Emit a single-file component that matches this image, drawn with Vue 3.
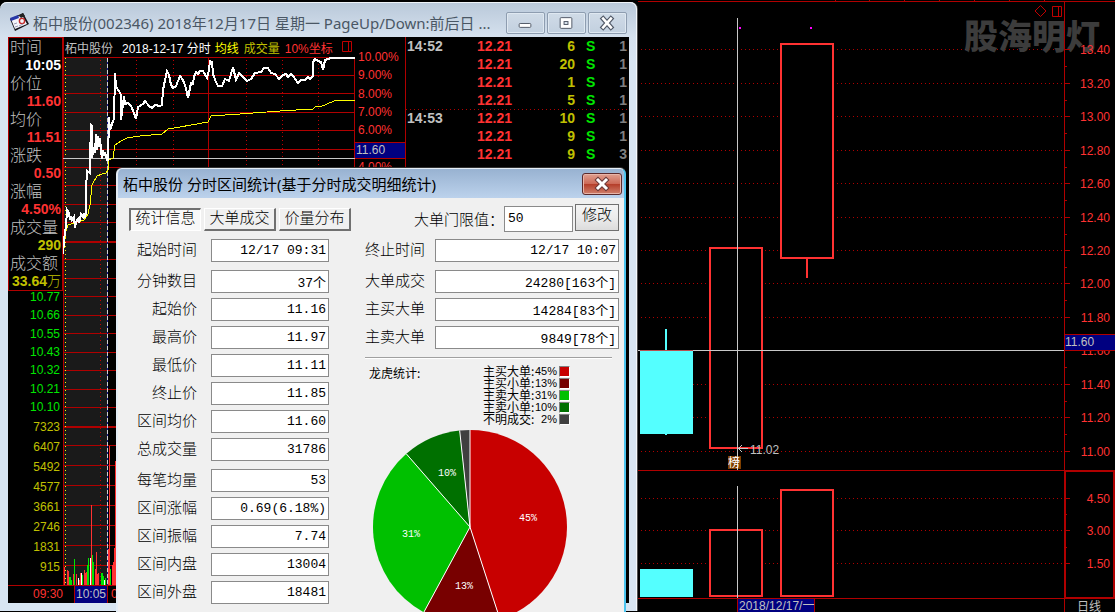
<script setup>
const quotes = [
  { label: '时间', value: '10:05', tone: 'white' },
  { label: '价位', value: '11.60', tone: 'red' },
  { label: '均价', value: '11.51', tone: 'red' },
  { label: '涨跌', value: '0.50', tone: 'red' },
  { label: '涨幅', value: '4.50%', tone: 'red' },
  { label: '成交量', value: '290', tone: 'yellow' },
  { label: '成交额', value: '33.64', unit: '万', tone: 'yellow' },
]
const lowPrices = ['10.77', '10.66', '10.55', '10.43', '10.32', '10.21', '10.10']
const volumes = ['7323', '6407', '5492', '4577', '3661', '2746', '1831', '915']
const percents = ['10.00%', '9.00%', '8.00%', '7.00%', '6.00%', '', '4.00%']
const trades = [
  { time: '14:52', price: '12.21', size: 6, side: 'S', count: 1 },
  { time: '', price: '12.21', size: 20, side: 'S', count: 1 },
  { time: '', price: '12.21', size: 1, side: 'S', count: 1 },
  { time: '', price: '12.21', size: 5, side: 'S', count: 1 },
  { time: '14:53', price: '12.21', size: 10, side: 'S', count: 1 },
  { time: '', price: '12.21', size: 9, side: 'S', count: 1 },
  { time: '', price: '12.21', size: 9, side: 'S', count: 3 },
]
const gridRows = [75, 93, 112, 130, 149, 167, 185, 204, 222, 259, 278, 296, 315, 333, 352, 370, 389, 407, 445, 465, 485, 505, 525, 545, 565]
const dotCols = [100, 136, 173, 246, 282, 318]
const priceLine =
  '63,254 64,240 66,226 67,210 69,213 70,220 71,216 72,220 74,217 75,228 76,222 78,219 79,223 81,214 83,217 84,213 85,218 86,212 86,190 87,171 90,173 90,160 91,125 92,126 92,158 94,147 95,153 96,134 97,150 98,136 99,147 100,138 101,150 102,159 103,150 104,156 105,152 107,160 108,160 109,117 110,130 112,124 114,119 115,73 116,87 119,91 121,95 121,120 124,96 125,104 128,103 131,106 134,113 136,119 138,107 143,104 145,101 149,106 152,108 155,105 160,106 162,105 163,90 165,80 167,71 169,75 171,85 173,88 176,86 180,76 183,80 186,88 188,98 191,83 193,84 194,77 196,72 198,74 200,71 203,71 207,78 209,70 210,61 212,62 213,74 216,82 218,86 222,86 225,79 229,81 233,67 236,80 239,73 243,77 247,81 251,79 255,73 261,72 264,68 268,68 271,73 275,74 279,79 283,75 286,74 288,77 291,74 293,76 298,83 301,80 305,80 308,77 310,79 313,76 313,62 315,59 318,61 321,62 323,70 325,60 328,59 331,58 355,58'
const averageLine =
  '64,248 66,231 68,225 74,223 84,220 88,214 90,205 92,185 97,176 102,174 106,173 108,170 109,160 113,158 115,145 121,141 127,138 140,136 162,134 168,129 180,127 208,122 211,116 240,114 280,111 313,109 316,106 320,107 327,104 334,101 355,100'
const bars = [
  [64, 567, 'r'], [67, 570, 'r'], [68, 571, 'r'], [69, 577, 'g'], [70, 577, 'g'], [71, 580, 'g'], [73, 574, 'r'],
  [74, 559, 'g'], [76, 574, 'r'], [78, 578, 'w'], [79, 580, 'r'], [80, 573, 'r'], [81, 573, 'w'], [82, 575, 'g'],
  [84, 570, 'r'], [85, 573, 'r'], [86, 572, 'r'], [87, 565, 'g'], [88, 558, 'g'], [90, 558, 'w'], [91, 505, 'r'],
  [92, 555, 'g'], [93, 562, 'g'], [95, 569, 'r'], [96, 552, 'r'], [97, 574, 'r'], [98, 573, 'r'], [101, 573, 'g'],
  [102, 573, 'g'], [103, 576, 'g'], [104, 580, 'w'], [105, 578, 'g'], [108, 549, 'r'], [109, 446, 'r'], [110, 569, 'g'],
  [112, 565, 'r'], [113, 562, 'r'], [114, 548, 'r'], [115, 461, 'r'],
]

const tabs = ['统计信息', '大单成交', '价量分布']
const leftStats = [
  { label: '起始时间', value: '12/17 09:31' },
  { label: '分钟数目', value: '37个', group: true },
  { label: '起始价', value: '11.16' },
  { label: '最高价', value: '11.97' },
  { label: '最低价', value: '11.11' },
  { label: '终止价', value: '11.85' },
  { label: '区间均价', value: '11.60' },
  { label: '总成交量', value: '31786' },
  { label: '每笔均量', value: '53', group: true },
  { label: '区间涨幅', value: '0.69(6.18%)' },
  { label: '区间振幅', value: '7.74' },
  { label: '区间内盘', value: '13004' },
  { label: '区间外盘', value: '18481' },
]
const rightStats = [
  { label: '终止时间', value: '12/17 10:07' },
  { label: '大单成交', value: '24280[163个]', group: true },
  { label: '主买大单', value: '14284[83个]' },
  { label: '主卖大单', value: '9849[78个]' },
]
const slices = [
  { name: '主买大单', pct: '45%', end: 0.45, color: '#c80000', lx: 156, ly: 92 },
  { name: '主买小单', pct: '13%', end: 0.579, color: '#780000', lx: 92, ly: 160 },
  { name: '主卖大单', pct: '31%', end: 0.886, color: '#00c000', lx: 39, ly: 108 },
  { name: '主卖小单', pct: '10%', end: 0.983, color: '#007000', lx: 75, ly: 47 },
  { name: '不明成交', pct: '2%', end: 1, color: '#404040' },
]
const rim = (f) => {
  const a = f * Math.PI * 2
  return [98 + 97 * Math.sin(a), 98 - 97 * Math.cos(a)]
}
const pie = slices.map((s, i) => {
  const start = i ? slices[i - 1].end : 0
  const [x1, y1] = rim(start)
  const [x2, y2] = rim(s.end)
  return { ...s, d: `M98 98L${x1} ${y1}A97 97 0 0 1 ${x2} ${y2}Z`, x: x2, y: y2 }
})

const priceAxis = [
  [49, '13.40'], [83, '13.20'], [116, '13.00'], [150, '12.80'], [183, '12.60'], [217, '12.40'], [250, '12.20'],
  [283, '12.00'], [317, '11.80'], [350, '11.60'], [384, '11.40'], [417, '11.20'], [451, '11.00'],
]
const volumeAxis = [[498, '4.50'], [530, '3.00'], [563, '1.50']]
const minorTicks = [66, 100, 133, 167, 200, 234, 267, 300, 334, 367, 401, 434, 514, 547]
const topTicks = [835, 869, 904, 939, 974, 1009, 1044]
</script>

<template>
  <main class="desktop">
    <section class="daily" aria-label="日线">
      <div class="plot">
        <svg class="plot-art" aria-hidden="true">
          <g transform="translate(-638 0)" shape-rendering="crispEdges">
            <g stroke="#b00000">
              <line v-for="x in topTicks" :key="x" :x1="x + 0.5" :x2="x + 0.5" y1="0" y2="2" />
            </g>
            <g class="dots">
              <line v-for="[y] in priceAxis" :key="y" x1="641" x2="2600" :y1="y + 0.5" :y2="y + 0.5" />
              <line v-for="[y] in volumeAxis" :key="y" x1="641" x2="2600" :y1="y + 0.5" :y2="y + 0.5" />
            </g>
            <g fill="#b00000">
              <rect x="638" y="1" width="2000" height="1" />
              <rect x="638" y="470" width="2000" height="1" />
              <rect x="638" y="598" width="2000" height="1" />
            </g>
            <g fill="#54ffff">
              <rect x="640" y="351" width="53" height="83" />
              <rect x="665" y="329" width="2" height="22" />
              <rect x="665" y="434" width="2" height="1" />
              <rect x="640" y="569" width="53" height="28" />
            </g>
            <g fill="#000" stroke="#ff3232" stroke-width="2">
              <rect x="710" y="248" width="52" height="200" />
              <rect x="781" y="44" width="52" height="214" />
              <rect x="710" y="530" width="52" height="66" />
              <rect x="781" y="490" width="52" height="106" />
              <line x1="807" x2="807" y1="259" y2="278" />
            </g>
            <g fill="#ff00ff">
              <rect x="739" y="27" width="2" height="2" />
              <rect x="810" y="27" width="2" height="2" />
            </g>
            <rect x="728" y="456" width="13" height="13" fill="#804000" />
            <g fill="#c8c8c8">
              <rect x="638" y="350" width="2000" height="1" />
              <rect x="737" y="18" width="1" height="452" />
              <rect x="737" y="486" width="1" height="112" />
            </g>
            <path d="M748 448.500H738M742 445l-3 3.500 3 3.500" stroke="#c8c8c8" fill="none" />
            <rect x="640" y="350" width="53" height="1" fill="#b85050" />
          </g>
          <g transform="translate(-638 0)">
            <text class="note" x="750" y="454">11.02</text>
            <text class="badge" x="728" y="467">榜</text>
          </g>
        </svg>
        <svg class="tools" viewBox="0 0 28 13" aria-hidden="true">
          <path d="M6.500 .5l5.500 5.500-5.500 5.500L1 6zM18.500 1.500h9v10h-9zM24.500 1.500v10" fill="none" stroke="#c00000" />
        </svg>
        <div class="date-tag">2018/12/17/一</div>
      </div>
      <svg class="axis">
        <g shape-rendering="crispEdges" fill="#b00000">
          <rect x="0" y="1" width="1" height="611" />
          <rect x="0" y="1" width="51" height="1" />
          <rect v-for="[y] in priceAxis" :key="y" x="1" :y="y" width="5" height="1" />
          <rect v-for="[y] in volumeAxis" :key="y" x="1" :y="y" width="5" height="1" />
          <rect v-for="y in minorTicks" :key="y" x="1" :y="y" width="2" height="1" />
          <rect x="1" y="471" width="49" height="127" fill="none" stroke="#b00000" stroke-width="2" />
        </g>
        <text v-for="[y, t] in priceAxis" :key="t" class="axis-text" x="46" :y="y + 5">{{ t }}</text>
        <text v-for="[y, t] in volumeAxis" :key="t" class="axis-text" x="46" :y="y + 5">{{ t }}</text>
        <rect x="1" y="334" width="50" height="17" fill="#b00000" />
        <rect x="1" y="335" width="50" height="15" fill="#000080" />
        <text class="note" x="1" y="346">11.60</text>
        <text class="period" x="13" y="611">日线</text>
      </svg>
      <div class="watermark">股海明灯</div>
    </section>

    <section class="window">
      <header class="titlebar">
        <svg class="app-icon" viewBox="0 0 22 20" aria-hidden="true">
          <path d="M1 7L14 1l6 11-14 7z" fill="#15151c" />
          <path d="M2 7l4 10 12-5-5-9z" fill="#f4f4fa" />
          <path d="M1 6l8-3 1 3-8 3z" fill="#2737a8" />
          <path d="M10 4l4-3 2 3-4 2z" fill="#222" />
          <circle cx="13" cy="9" r="2.600" fill="none" stroke="#c52a2a" stroke-width="1.400" />
          <path d="M5 12l3-1M6 15l3-1M10 14l4-2" stroke="#9a9ab5" />
        </svg>
        <h1>柘中股份(002346) 2018年12月17日 星期一 PageUp/Down:前后日 ...</h1>
        <div class="controls">
          <button type="button" aria-label="最小化">
            <svg viewBox="0 0 38 20"><rect x="12.500" y="10.500" width="12" height="4" rx="1" fill="#fff" stroke="#505866" /></svg>
          </button>
          <button type="button" aria-label="最大化">
            <svg viewBox="0 0 38 20"><rect x="12.500" y="4.500" width="12" height="11" rx="1" fill="#fff" stroke="#505866" /><rect x="16.500" y="8.500" width="4" height="3" fill="#dbe5ef" stroke="#505866" /></svg>
          </button>
          <button type="button" aria-label="关闭">
            <svg viewBox="0 0 38 20"><path d="M14.500 5.500l8 9M22.500 5.500l-8 9" stroke="#505866" stroke-width="5" stroke-linecap="square" /><path d="M14.500 5.500l8 9M22.500 5.500l-8 9" stroke="#fff" stroke-width="2.600" stroke-linecap="square" /></svg>
          </button>
        </div>
      </header>

      <div class="content">
        <aside class="side">
          <dl class="quotes">
            <template v-for="q in quotes" :key="q.label">
              <dt>{{ q.label }}</dt>
              <dd :class="q.tone">{{ q.value }}<span v-if="q.unit" class="unit">{{ q.unit }}</span></dd>
            </template>
          </dl>
          <div class="scale low"><span v-for="p in lowPrices" :key="p">{{ p }}</span></div>
          <div class="scale vol"><span v-for="v in volumes" :key="v">{{ v }}</span></div>
          <div class="time-cell">09:30</div>
        </aside>

        <div class="minute">
          <div class="legendbar">
            <span class="grey">柘中股份</span>
            <span class="white">2018-12-17 分时</span>
            <span class="bright">均线</span>
            <span class="yellow">成交量</span>
            <span class="red">10%坐标</span>
            <svg viewBox="0 0 11 12" aria-hidden="true"><path d="M.5.500h9v10h-9zM6.500.500v10" fill="none" stroke="#c00000" /></svg>
          </div>
          <svg class="minute-art" viewBox="63 57 292 528" aria-hidden="true">
            <g shape-rendering="crispEdges">
              <rect x="63" y="57" width="44" height="528" fill="#1a1a1a" />
              <g fill="#b00000">
                <rect x="63" y="57" width="292" height="1" />
                <rect v-for="y in gridRows" :key="y" x="63" :y="y" width="292" height="1" />
                <rect x="63" y="241" width="292" height="2" />
                <rect x="63" y="426" width="292" height="2" />
                <rect x="63" y="57" width="1" height="528" />
                <rect x="208" y="57" width="1" height="528" />
                <rect x="354" y="57" width="1" height="528" />
              </g>
              <g stroke="#c00000" stroke-dasharray="1 3">
                <line v-for="x in dotCols" :key="x" :x1="x + 0.5" :x2="x + 0.5" y1="60" y2="585" />
              </g>
              <line x1="65.500" x2="65.500" y1="58" y2="585" stroke="#ffff00" stroke-dasharray="1 3" />
              <rect v-for="([x, y, c], i) in bars" :key="i" :x="x" :y="y" width="1" :height="585 - y" :class="'bar-' + c" />
              <line x1="107.500" x2="107.500" y1="58" y2="585" stroke="#1a1a90" />
              <line x1="107.500" x2="107.500" y1="58" y2="585" stroke="#d0d0d0" stroke-dasharray="4 2" />
              <rect x="63" y="158" width="292" height="1" fill="#c8c8c8" />
              <polyline :points="averageLine" fill="none" stroke="#ffff00" />
              <polyline :points="priceLine" fill="none" stroke="#fff" stroke-width="2" />
            </g>
          </svg>
          <div class="timebar"><span class="now">10:05</span><span class="red">0</span></div>
        </div>

        <div class="percent">
          <div class="percent-scale"><span v-for="p in percents" :key="p">{{ p }}</span></div>
          <span class="price-tag">11.60</span>
        </div>

        <table class="trades">
          <tbody>
            <tr v-for="(t, i) in trades" :key="i" :class="{ minuteStart: i === 4 }">
              <td class="t-time">{{ t.time }}</td>
              <td class="t-price">{{ t.price }}</td>
              <td class="t-size">{{ t.size }}</td>
              <td class="t-side">{{ t.side }}</td>
              <td class="t-count">{{ t.count }}</td>
            </tr>
          </tbody>
        </table>
      </div>
    </section>

    <section class="dialog" role="dialog" aria-labelledby="dialog-title">
      <header class="dialog-bar">
        <h2 id="dialog-title">柘中股份 分时区间统计(基于分时成交明细统计)</h2>
        <button type="button" class="dialog-close" aria-label="关闭">
          <svg viewBox="0 0 38 20"><path d="M15 6l8 8M23 6l-8 8" stroke="#6a3a3a" stroke-width="5" stroke-linecap="square" /><path d="M15 6l8 8M23 6l-8 8" stroke="#fff" stroke-width="3" stroke-linecap="square" /></svg>
        </button>
      </header>
      <div class="toolbar">
        <div class="tabs">
          <button v-for="(t, i) in tabs" :key="t" type="button" :class="{ active: i === 0 }">{{ t }}</button>
        </div>
        <label for="limit">大单门限值：</label>
        <input id="limit" type="text" value="50" />
        <button type="button" class="modify">修改</button>
      </div>
      <div class="columns">
        <div class="stats left">
          <div v-for="(s, i) in leftStats" :key="s.label" class="stat" :class="{ group: s.group }">
            <label :for="'l' + i">{{ s.label }}</label>
            <input :id="'l' + i" type="text" readonly :value="s.value" />
          </div>
        </div>
        <div class="right">
          <div class="stats">
            <div v-for="(s, i) in rightStats" :key="s.label" class="stat" :class="{ group: s.group }">
              <label :for="'r' + i">{{ s.label }}</label>
              <input :id="'r' + i" type="text" readonly :value="s.value" />
            </div>
          </div>
          <hr />
          <div class="summary">
            <span>龙虎统计:</span>
            <ul>
              <li v-for="s in slices" :key="s.name">
                <span class="name">{{ s.name }}:</span><span class="pct">{{ s.pct }}</span>
                <i :style="{ background: s.color }"></i>
              </li>
            </ul>
          </div>
          <svg class="pie" viewBox="0 0 196 196" role="img" aria-label="龙虎统计">
            <path v-for="s in pie" :key="s.name" :d="s.d" :fill="s.color" />
            <line v-for="s in pie" :key="s.pct" x1="98" y1="98" :x2="s.x" :y2="s.y" stroke="#fff" />
            <template v-for="s in pie" :key="s.color">
              <text v-if="s.lx" :x="s.lx" :y="s.ly">{{ s.pct }}</text>
            </template>
          </svg>
        </div>
      </div>
    </section>
  </main>
</template>

<style>
html,
body {
  background: #000;
}
</style>

<style scoped>
* {
  box-sizing: border-box;
}
.desktop {
  position: relative;
  height: 100vh;
  overflow: hidden;
  background: #000;
  font-family: 'Liberation Sans', 'Noto Sans CJK SC', sans-serif;
  font-size: 12px;
}
h1,
h2,
dl,
dd,
ul {
  margin: 0;
  padding: 0;
  font-weight: normal;
}
button,
input {
  font-family: inherit;
  margin: 0;
  padding: 0;
}
.white { color: #fff; }
.grey { color: #c0c0c0; }
.red { color: #ff3232; }
.yellow { color: #c0c000; }
.bright { color: #ffff00; }

.daily {
  position: relative;
  display: flex;
  height: 100%;
  padding-left: 638px;
}
.plot {
  position: relative;
  flex: 1;
}
.plot-art {
  display: block;
  width: 100%;
  height: 100%;
}
.dots line {
  stroke: #b00000;
  stroke-dasharray: 1 3;
}
.tools {
  position: absolute;
  top: 5px;
  right: 2px;
  width: 28px;
  height: 13px;
}
.date-tag {
  position: absolute;
  left: 99px;
  top: 599px;
  height: 14px;
  padding: 0 0 0 1px;
  line-height: 14px;
  background: #000080;
  border: solid #b00000;
  border-width: 0 1px;
  color: #c0c0c0;
  white-space: nowrap;
}
.axis {
  display: block;
  width: 51px;
  height: 100%;
  position: relative;
  z-index: 1;
}
.axis-text {
  fill: #ff3232;
  text-anchor: end;
}
.note,
.period {
  fill: #c0c0c0;
}
.badge {
  fill: #fff;
}
.watermark {
  position: absolute;
  top: 12px;
  right: 15px;
  font: 900 34px/46px 'Noto Sans CJK SC', sans-serif;
  color: #3c3c3c;
}

.window {
  position: absolute;
  left: 0;
  top: 2px;
  bottom: 1px;
  width: 637px;
  display: flex;
  flex-direction: column;
  padding: 0 8px 8px;
  border-radius: 7px 7px 0 0;
  background: linear-gradient(#b9c8d9 0, #d5e1ee 35px, #d8e5f2 60px);
  box-shadow: inset 0 1px #eef3f8, inset -1px 0 #f4f8fc, 1px 0 #505050;
}
.titlebar {
  display: flex;
  align-items: center;
  height: 35px;
  flex: none;
}
.app-icon {
  width: 22px;
  height: 20px;
  margin: 5px 2px 0 1px;
}
h1 {
  flex: 1;
  padding-top: 6px;
  font: 15px/22px 'Noto Sans', 'Noto Sans CJK SC', sans-serif;
  color: #4a5765;
  white-space: nowrap;
}
.controls {
  display: flex;
  gap: 2px;
  margin: 6px 2px 0 0;
}
.controls button {
  width: 39px;
  height: 22px;
  border: 1px solid #8e9db0;
  border-radius: 2px;
  background: linear-gradient(#d0dbe7, #c2d0df);
  box-shadow: inset 0 0 0 1px #dfe8f1;
}
.controls svg,
.dialog-close svg {
  display: block;
  width: 100%;
  height: 100%;
}
.controls path,
.dialog-close path {
  fill: none;
}
.content {
  flex: 1;
  min-height: 0;
  display: grid;
  grid-template-columns: 55px 292px 51px 1fr;
  background: #000;
  overflow: hidden;
}
.side {
  display: flex;
  flex-direction: column;
}
.quotes {
  border: 1px solid #b00000;
  color: #c0c0c0;
}
.quotes dt {
  height: 18px;
  padding-left: 1px;
  font-size: 16px;
  font-weight: 300;
  line-height: 20px;
  white-space: nowrap;
}
.quotes dd {
  display: flex;
  justify-content: flex-end;
  height: 18px;
  padding-right: 1px;
  font-size: 14px;
  font-weight: bold;
  line-height: 18px;
}
.unit {
  font-weight: 300;
}
.scale {
  display: flex;
  flex-direction: column;
  justify-content: space-between;
  padding-right: 3px;
  text-align: right;
  line-height: 12px;
}
.low {
  height: 122px;
  color: #00e600;
}
.vol {
  height: 152px;
  margin-top: 8px;
  color: #c0c000;
}
.time-cell {
  margin-top: 12px;
  height: 19px;
  border-top: 1px solid #b00000;
  text-align: right;
  line-height: 17px;
  color: #ff3232;
}
.legendbar {
  display: flex;
  align-items: center;
  height: 20px;
  padding-left: 1px;
  border-left: 1px solid #b00000;
  white-space: nowrap;
}
.legendbar .white { margin-left: 9px; }
.legendbar .bright { margin-left: 4px; }
.legendbar .yellow,
.legendbar .red { margin-left: 5px; }
.legendbar svg {
  width: 11px;
  height: 12px;
  margin: 0 2px 0 auto;
}
.minute-art {
  display: block;
  width: 292px;
  height: 528px;
}
.bar-r { fill: #ff3232; }
.bar-g { fill: #00e600; }
.bar-w { fill: #fff; }
.timebar {
  display: flex;
  height: 18px;
  border-top: 1px solid #b00000;
  line-height: 16px;
  gap: 3px;
  padding-left: 11px;
}
.now {
  padding: 0 1px;
  background: #000080;
  border: solid #b00000;
  border-width: 0 1px;
  color: #c0c0c0;
}
.percent {
  position: relative;
  border-right: 1px solid #b00000;
  padding: 14px 0 0 3px;
  color: #ff3232;
}
.percent-scale {
  display: flex;
  flex-direction: column;
  justify-content: space-between;
  height: 122px;
  line-height: 12px;
}
.percent-scale span {
  height: 12px;
}
.price-tag {
  position: absolute;
  left: 0;
  right: 0;
  top: 105px;
  height: 17px;
  padding-left: 1px;
  line-height: 15px;
  background: #000080;
  border: solid #b00000;
  border-width: 1px 0;
  color: #c0c0c0;
}
.trades {
  align-self: start;
  width: 100%;
  border-collapse: collapse;
  table-layout: fixed;
  font-size: 14px;
  font-weight: bold;
  line-height: 18px;
}
.trades td {
  height: 18px;
  padding: 0;
}
.trades .t-time {
  width: 71px;
  padding-left: 1px;
  color: #c0c0c0;
}
.t-price {
  width: 40px;
  color: #ff3232;
}
.t-size {
  width: 58px;
  text-align: right;
  color: #c0c000;
}
.trades .t-side {
  width: 30px;
  padding-left: 11px;
  color: #00e600;
}
.trades .t-count {
  padding-right: 2px;
  text-align: right;
  color: #808080;
}
.minuteStart {
  background: repeating-linear-gradient(90deg, #b00000 0 1px, #000 1px 4px) 0 0 / 100% 1px no-repeat;
}

.dialog {
  position: absolute;
  left: 116px;
  top: 168px;
  width: 510px;
  min-height: 460px;
  border: solid #e4edf6;
  border-width: 1px 2px 0;
  border-right-color: #4cc4ee;
  border-radius: 6px 6px 0 0;
  background: #f0f0f0;
  box-shadow: 0 -1px #303030;
  overflow: hidden;
  font-family: 'Liberation Mono', 'Noto Sans CJK SC', monospace;
  font-size: 15px;
  font-weight: 300;
  color: #000;
}
.dialog-bar {
  display: flex;
  justify-content: space-between;
  align-items: center;
  height: 29px;
  padding: 1px 2px 0 5px;
  background: linear-gradient(#98b2d1, #bcd2ec);
}
h2 {
  font: 15px/24px 'Noto Sans', 'Noto Sans CJK SC', sans-serif;
}
.dialog-close {
  width: 40px;
  height: 22px;
  border: 1px solid #5c2a2c;
  border-radius: 3px;
  background: linear-gradient(#e0a090, #cd6a58 48%, #b43c28 50%, #d0806c);
  box-shadow: inset 0 0 0 1px #e8b4a8;
}
.toolbar {
  display: flex;
  align-items: center;
  height: 37px;
  padding: 5px 5px 0 11px;
}
.tabs {
  display: flex;
  gap: 3px;
  margin-right: auto;
}
.tabs button {
  width: 72px;
  height: 23px;
  padding-top: 1px;
  border: solid;
  border-width: 1px 2px 2px 1px;
  border-color: #fff #707070 #707070 #fff;
  background: #f0f0f0;
  font-size: 15px;
  font-weight: 300;
  line-height: 20px;
  white-space: nowrap;
}
.tabs .active {
  padding: 0;
  border-width: 2px 1px 1px 2px;
  border-color: #707070 #fff #fff #707070;
  background: #f8f8f8;
}
.toolbar input {
  width: 69px;
  height: 26px;
  padding: 0 3px 2px;
  border: 1px solid #8a8a8a;
  background: #fff;
  font-size: 13px;
}
.modify {
  width: 44px;
  height: 27px;
  margin: 0 0 4px 2px;
  border: 1px solid #707070;
  background: linear-gradient(#f4f4f4, #ececec 50%, #dcdcdc);
  font-size: 15px;
  font-weight: 300;
  line-height: 24px;
}
.columns {
  display: flex;
  justify-content: space-between;
  padding: 4px 5px 0 19px;
}
.stats {
  display: flex;
  flex-direction: column;
  gap: 5px;
}
.stat {
  display: flex;
  align-items: center;
  justify-content: flex-end;
  height: 23px;
}
.stat.group {
  margin-top: 3px;
}
.stat label {
  padding-top: 2px;
  line-height: 20px;
}
.stat input {
  width: 118px;
  height: 23px;
  margin-left: 14px;
  padding: 0 2px;
  border: 1px solid #8a8a8a;
  background: #fff;
  font-size: 13px;
  text-align: right;
  color: #000;
}
.right .stat input {
  width: 184px;
  margin-left: 10px;
}
hr {
  margin: 8px 7px 0 0;
  border: 0;
  height: 2px;
  background: #a0a0a0;
  border-bottom: 1px solid #fff;
}
.summary {
  display: flex;
  justify-content: space-between;
  padding: 6px 49px 0 4px;
  font: 12px/16px 'Noto Sans CJK SC', sans-serif;
}
.summary ul {
  list-style: none;
}
.summary li {
  display: flex;
  align-items: center;
  height: 12px;
}
.name {
  width: 52px;
  white-space: nowrap;
}
.pct {
  width: 22px;
  font: 11px/12px 'Liberation Sans', sans-serif;
  text-align: right;
}
.summary i {
  width: 11px;
  height: 11px;
  margin-left: 2px;
  border: 1px solid;
  border-color: #808080 #fff #fff #808080;
}
.pie {
  display: block;
  width: 196px;
  height: 196px;
  margin: 4px 0 0 7px;
}
.pie text {
  fill: #fff;
  font: 10px 'Liberation Mono', monospace;
  text-anchor: middle;
}
</style>
